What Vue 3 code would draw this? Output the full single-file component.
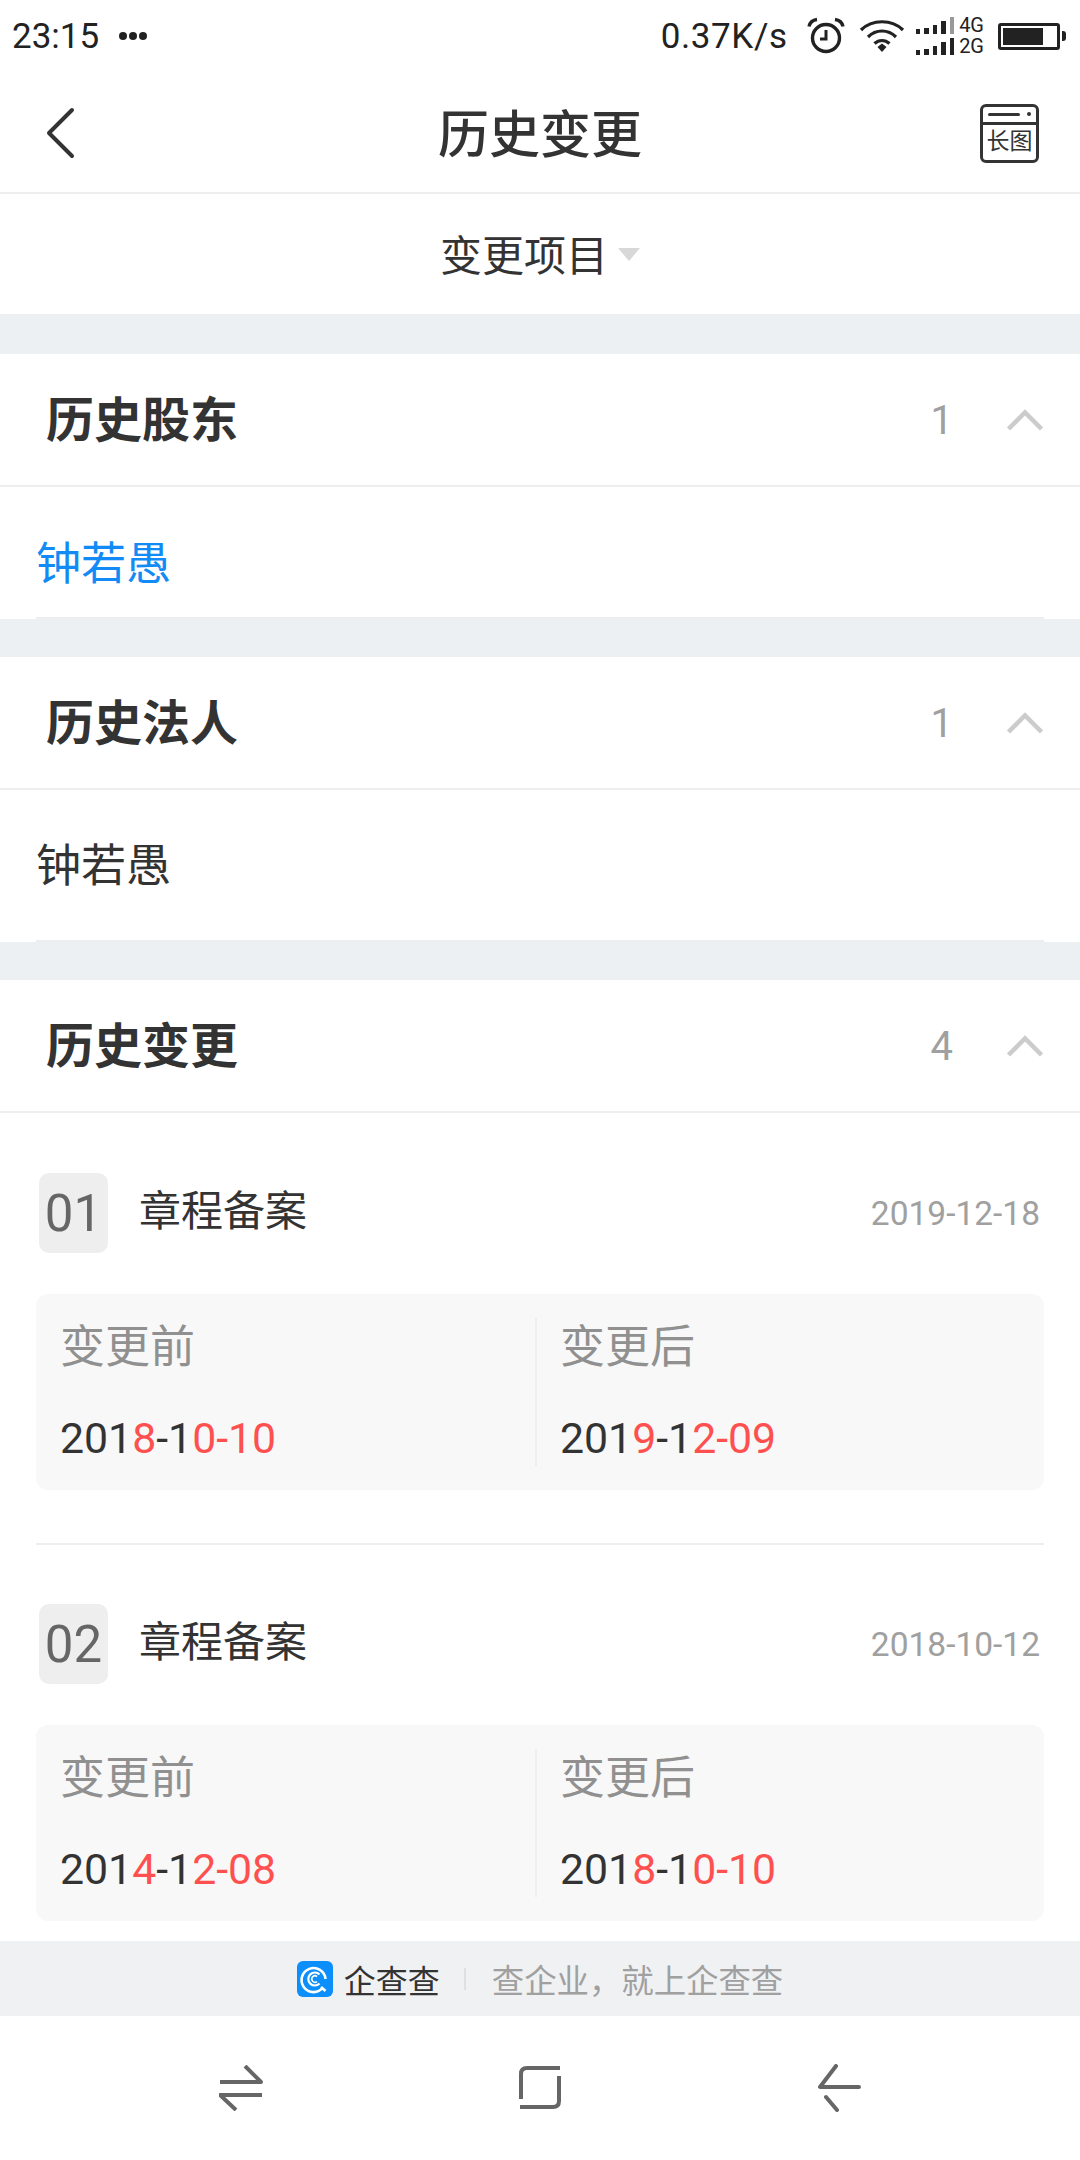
<template>
<div class="page">
    <div class="status-bar">
        <div class="status-left">
            <span class="time">23:15</span>
            <span class="dots"><i></i><i></i><i></i></span>
        </div>
        <div class="status-right">
            <span class="speed">0.37K/s</span>
            <svg class="alarm" width="38" height="38" viewBox="0 0 38 38" fill="none" stroke="#222">
                <circle cx="19" cy="21" r="13.5" stroke-width="3.4" />
                <path d="M19 13v9h-6" stroke-width="3" />
                <path d="M2 9.5C3 5 6 3 10 2.5M36 9.5C35 5 32 3 28 2.5" stroke-width="3.4" />
            </svg>
            <svg class="wifi" width="46" height="36" viewBox="0 0 46 36" fill="none" stroke="#222" stroke-width="3.2">
                <path d="M2 12C13 1 33 1 44 12" />
                <path d="M9 19C17 11 29 11 37 19" />
                <path d="M15.500 25.500C20 21.500 26 21.500 30.500 25.500" />
                <path d="M18.500 29L23 25.500L27.500 29L23 34Z" fill="#222" stroke="none" />
            </svg>
            <div class="signal">
                <div class="signal-row" v-for="(row, index) in signals" :key="index">
                    <div class="bars">
                        <i v-for="(h, i) in barHeights" :key="i" :class="{ weak: row.weak && i === 4 }" :style="{ height: h + 'px' }"></i>
                    </div>
                    <span>{{ row.label }}</span>
                </div>
            </div>
            <div class="battery"><div class="battery-level"></div></div>
            <div class="battery-cap"></div>
        </div>
    </div>

    <header class="nav-bar">
        <svg class="back" width="30" height="52" viewBox="0 0 30 52" fill="none" stroke="#333" stroke-width="4" stroke-linecap="round" stroke-linejoin="round">
            <path d="M26 3L3 26L26 49" />
        </svg>
        <h1 class="nav-title">历史变更</h1>
        <div class="long-icon">
            <div class="long-top"><i class="long-bar"></i><i class="long-dot"></i></div>
            <div class="long-text">长图</div>
        </div>
    </header>

    <div class="filter">
        <span>变更项目</span>
        <i class="caret"></i>
    </div>

    <main class="content">
        <section class="block">
            <div class="block-head">
                <h2>历史股东</h2>
                <span class="count">1</span>
                <svg class="chevron" width="36" height="22" viewBox="0 0 36 22" fill="none" stroke="#ccc" stroke-width="4.500">
                    <path d="M1.500 20L18 3.500L34.500 20" />
                </svg>
            </div>
            <div class="person link">钟若愚</div>
        </section>

        <section class="block">
            <div class="block-head">
                <h2>历史法人</h2>
                <span class="count">1</span>
                <svg class="chevron" width="36" height="22" viewBox="0 0 36 22" fill="none" stroke="#ccc" stroke-width="4.500">
                    <path d="M1.500 20L18 3.500L34.500 20" />
                </svg>
            </div>
            <div class="person tall">钟若愚</div>
        </section>

        <section class="block">
            <div class="block-head">
                <h2>历史变更</h2>
                <span class="count">4</span>
                <svg class="chevron" width="36" height="22" viewBox="0 0 36 22" fill="none" stroke="#ccc" stroke-width="4.500">
                    <path d="M1.500 20L18 3.500L34.500 20" />
                </svg>
            </div>
            <div class="changes">
                <div class="change" v-for="item in changes" :key="item.no">
                    <div class="change-head">
                        <span class="badge">{{ item.no }}</span>
                        <span class="change-name">章程备案</span>
                        <span class="change-date">{{ item.date }}</span>
                    </div>
                    <div class="compare">
                        <div class="side" v-for="side in item.sides" :key="side.label">
                            <div class="side-label">{{ side.label }}</div>
                            <div class="side-value">
                                <span v-for="(part, i) in side.parts" :key="i" :class="{ diff: i % 2 === 1 }">{{ part }}</span>
                            </div>
                        </div>
                    </div>
                </div>
            </div>
        </section>
    </main>

    <div class="brand">
        <svg class="brand-logo" width="36" height="36" viewBox="0 0 36 36" fill="none">
            <rect width="36" height="36" rx="6" fill="#0c8ffa" />
            <path d="M26 26.500A12 12 0 1 1 28.500 18" stroke="#fff" stroke-width="2.600" />
            <path d="M22.500 22.500A6.500 6.500 0 1 1 22.500 13.500" stroke="#fff" stroke-width="2.200" />
            <path d="M20 20.500A3.200 3.200 0 1 1 20 15.500" stroke="#fff" stroke-width="1.600" />
            <path d="M24 26l4.500 4" stroke="#fff" stroke-width="2.600" />
        </svg>
        <span class="brand-name">企查查</span>
        <i class="brand-sep"></i>
        <span class="brand-slogan">查企业，就上企查查</span>
    </div>

    <nav class="sys-nav">
        <svg width="44" height="46" viewBox="0 0 44 46" fill="none" stroke="#666" stroke-width="4">
            <path d="M1 17H42L26 1" stroke-linejoin="round" />
            <path d="M43 30H1L17 45" stroke-linejoin="round" />
        </svg>
        <svg width="42" height="44" viewBox="0 0 42 44" fill="none" stroke="#666" stroke-width="4">
            <path d="M41 2H8Q2 2 2 8V33" />
            <path d="M1 41H34Q40 41 40 35V10" />
        </svg>
        <svg width="44" height="48" viewBox="0 0 44 48" fill="none" stroke="#666" stroke-width="4" stroke-linecap="round" stroke-linejoin="round">
            <path d="M19 2L3 23H42" />
            <path d="M9 33L20 46" />
        </svg>
    </nav>
</div>
</template>

<script setup>
const barHeights = [5, 6, 9, 13, 17];

const signals = [
    { label: '4G', weak: true },
    { label: '2G', weak: false }
];

const changes = [
    {
        no: '01',
        date: '2019-12-18',
        sides: [
            { label: '变更前', parts: ['201', '8', '-1', '0-10'] },
            { label: '变更后', parts: ['201', '9', '-1', '2-09'] }
        ]
    },
    {
        no: '02',
        date: '2018-10-12',
        sides: [
            { label: '变更前', parts: ['201', '4', '-1', '2-08'] },
            { label: '变更后', parts: ['201', '8', '-1', '0-10'] }
        ]
    }
];
</script>

<style>
html, body {
    margin: 0;
    background: #fff;
}
</style>

<style scoped>
.page {
    width: 1080px;
    height: 2160px;
    display: flex;
    flex-direction: column;
    overflow: hidden;
    background: #fff;
    font-family: Roboto, "Noto Sans CJK SC", sans-serif;
    color: #333;
}

.status-bar {
    height: 74px;
    display: flex;
    justify-content: space-between;
    align-items: center;
    padding: 0 14px 2px 12px;
    box-sizing: border-box;
    flex-shrink: 0;
    color: #222;
}

.status-left, .status-right {
    display: flex;
    align-items: center;
}

.time {
    font-size: 35px;
}

.dots {
    display: flex;
    gap: 2px;
    margin-left: 20px;
}

.dots i {
    width: 8px;
    height: 8px;
    border-radius: 50%;
    background: #222;
}

.speed {
    font-size: 35px;
    letter-spacing: 0.6px;
}

.alarm {
    margin-left: 19px;
}

.wifi {
    margin-left: 14px;
}

.signal {
    margin-left: 11px;
    display: flex;
    flex-direction: column;
    gap: 4px;
}

.signal-row {
    display: flex;
    align-items: flex-end;
    height: 17px;
}

.signal-row span {
    font-size: 20px;
    line-height: 17px;
    margin-left: 5px;
}

.bars {
    display: flex;
    align-items: flex-end;
    gap: 4px;
    height: 17px;
}

.bars i {
    width: 4.500px;
    background: #222;
}

.bars i.weak {
    background: #999;
}

.battery {
    width: 62px;
    height: 27px;
    margin-left: 14px;
    border: 3px solid #222;
    border-radius: 3px;
    box-sizing: border-box;
    padding: 2px;
}

.battery-level {
    width: 40px;
    height: 100%;
    background: #222;
}

.battery-cap {
    width: 4px;
    height: 10px;
    margin-left: 2px;
    background: #222;
    border-radius: 0 3px 3px 0;
}

.nav-bar {
    height: 120px;
    flex-shrink: 0;
    display: grid;
    grid-template-columns: 1fr auto 1fr;
    align-items: center;
    padding: 0 41px;
    box-sizing: border-box;
    border-bottom: 2px solid #eee;
}

.back {
    margin-left: 5px;
}

.nav-title {
    margin: 0 0 4px;
    font-size: 51px;
    font-weight: 500;
    color: #333;
}

.long-icon {
    justify-self: end;
    width: 59px;
    height: 59px;
    box-sizing: border-box;
    border: 3px solid #333;
    border-radius: 6px;
    display: flex;
    flex-direction: column;
}

.long-top {
    height: 15px;
    border-bottom: 3px solid #333;
    display: flex;
    align-items: center;
    justify-content: space-between;
    padding: 0 5px;
}

.long-bar {
    width: 32px;
    height: 3px;
    background: #333;
    border-radius: 2px;
}

.long-dot {
    width: 4px;
    height: 4px;
    background: #333;
    border-radius: 50%;
}

.long-text {
    font-size: 23px;
    line-height: 33px;
    text-align: center;
    color: #333;
    white-space: nowrap;
}

.filter {
    height: 120px;
    flex-shrink: 0;
    display: flex;
    align-items: center;
    justify-content: center;
    font-size: 42px;
    color: #333;
}

.filter span {
    margin-bottom: 4px;
}

.caret {
    margin-left: 10px;
    width: 0;
    height: 0;
    border-left: 11px solid transparent;
    border-right: 11px solid transparent;
    border-top: 13px solid #d8d8d8;
}

.content {
    flex: 1;
    min-height: 0;
    overflow: hidden;
    background: #edf0f3;
    padding-top: 40px;
    display: flex;
    flex-direction: column;
    gap: 38px;
}

.block {
    background: #fff;
    flex-shrink: 0;
}

.block-head {
    height: 133px;
    box-sizing: border-box;
    display: flex;
    align-items: center;
    padding: 0 37px 0 46px;
    border-bottom: 2px solid #eee;
}

.block-head h2 {
    margin: 0 0 8px;
    flex: 1;
    font-size: 48px;
    font-weight: 700;
    color: #333;
}

.count {
    font-size: 40px;
    color: #a0a0a0;
    margin: 2px 54px 0 0;
}

.person {
    margin: 0 36px;
    height: 132px;
    box-sizing: border-box;
    display: flex;
    align-items: center;
    font-size: 45px;
    color: #333;
    border-bottom: 2px solid #eee;
}

.person.link {
    color: #128bf6;
    padding-top: 16px;
}

.person.tall {
    height: 152px;
    padding-bottom: 6px;
}

.changes {
    padding: 60px 36px 0;
}

.change {
    border-bottom: 2px solid #eee;
    padding-bottom: 53px;
    margin-bottom: 59px;
}

.change-head {
    display: flex;
    align-items: center;
    height: 80px;
    margin-bottom: 41px;
    padding-left: 3px;
}

.badge {
    width: 69px;
    height: 80px;
    display: flex;
    align-items: center;
    justify-content: center;
    border-radius: 10px;
    background: #eee;
    color: #666;
    font-size: 51px;
}

.change-name {
    flex: 1;
    margin-left: 31px;
    margin-bottom: 12px;
    font-size: 42px;
    color: #333;
}

.change-date {
    font-size: 33.5px;
    color: #a0a0a0;
    margin-right: 4px;
}

.compare {
    height: 196px;
    border-radius: 12px;
    background: #f8f8f8;
    display: grid;
    grid-template-columns: 465px 1fr;
    position: relative;
}

.compare::after {
    content: "";
    position: absolute;
    left: 499px;
    top: 24px;
    bottom: 24px;
    width: 2px;
    background: #eee;
}

.side {
    padding: 25px 0 0 24px;
}

.side + .side {
    padding-left: 59px;
}

.side-label {
    font-size: 45px;
    line-height: 58px;
    color: #909090;
}

.side-value {
    margin-top: 37px;
    font-size: 42.800px;
    line-height: 48px;
    color: #333;
}

.diff {
    color: #ff5050;
}

.brand {
    height: 75px;
    flex-shrink: 0;
    display: flex;
    align-items: center;
    justify-content: center;
    background: #f0f1f3;
}

.brand-name {
    margin-left: 11px;
    font-size: 32px;
    color: #333;
}

.brand-sep {
    width: 2px;
    height: 22px;
    margin: 0 26px 0 24px;
    background: #e0e0e0;
}

.brand-slogan {
    font-size: 32.400px;
    color: #a0a0a0;
}

.sys-nav {
    height: 144px;
    flex-shrink: 0;
    display: flex;
    align-items: center;
    justify-content: space-between;
    padding: 0 219px 0 219px;
    box-sizing: border-box;
}
</style>
